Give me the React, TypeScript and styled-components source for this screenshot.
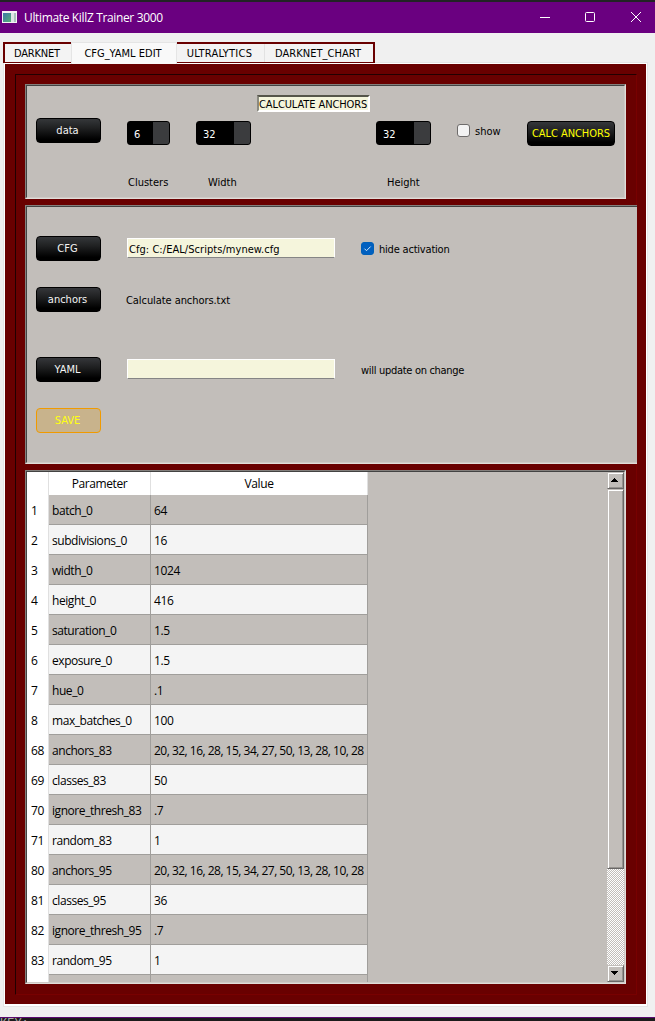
import React from 'react';
import styled, { createGlobalStyle, css } from 'styled-components';

const ui = css`
  font-family: 'DejaVu Sans Condensed', 'DejaVu Sans', sans-serif;
  font-stretch: condensed;
  font-size: 11px;
`;

const GlobalStyle = createGlobalStyle`
  * { box-sizing: border-box; }
  html, body { margin: 0; padding: 0; overflow: hidden; background: #f0f0f0; }
  body { ${ui} color: #000; line-height: 14px; white-space: nowrap; }
`;

const Window = styled.div`
  width: 655px;
  height: 1021px;
  display: flex;
  flex-direction: column;
  background: #f0f0f0;
  overflow: hidden;
`;

const TitleBar = styled.header`
  height: 33px;
  flex: none;
  border-top: 2px solid #222325;
  background: #6a0080;
  display: flex;
  align-items: center;
  padding: 0 0 1px 2px;
  color: #fff;
  font-family: 'Open Sans', 'Noto Sans', sans-serif;
  font-stretch: normal;
  font-size: 12px;
`;

const Title = styled.span`
  margin-left: 7px;
  letter-spacing: -0.35px;
  line-height: 16px;
  padding-top: 1px;
  flex: 1;
`;

const Controls = styled.div`
  display: flex;
  align-items: center;
  gap: 35px;
  padding-right: 14px;

  svg:last-child { margin-left: 1px; }
`;

const TabBar = styled.nav`
  position: relative;
  z-index: 1;
  margin: 9px 0 0 3px;
  width: 372px;
  height: 21px;
  flex: none;
  display: flex;
  background: #f3f3f3;
  border: 2px solid #690000;
  border-bottom-width: 1px;
`;

const Tab = styled.div<{ $w: number; $active?: boolean; $ls?: number; $line?: boolean }>`
  width: ${p => p.$w}px;
  height: 18px;
  line-height: 20px;
  padding-right: 2px;
  text-align: center;
  letter-spacing: ${p => p.$ls ?? 0}px;
  border-right: ${p => (p.$line ? '1px solid #e2e2e2' : 'none')};
  ${p => p.$active && css`
    margin-top: -2px;
    height: 22px;
    line-height: 21px;
    background: #f9f9f9;
    border: 1px solid #e5e5e5;
    border-bottom: none;
  `}
`;

const Page = styled.main`
  margin: -1px 0 0 3px;
  width: 645px;
  height: 945px;
  flex: none;
  background: #690000;
  border: 1px solid #e5e5e5;
  box-shadow: inset 1px 1px #fff, inset -1px -2px #fff;
  padding: 11px 10px 11px 11px;
`;

const Frame = styled.section`
  width: 622px;
  height: 921px;
  border-left: 1px solid #220000;
  border-top: 1px solid #220000;
  border-right: 1px solid #780000;
  border-bottom: 1px solid #780000;
  padding: 9px 0 0 9px;
  display: flex;
  flex-direction: column;
  gap: 6px;
`;

const Panel = styled.section<{ $w: number; $h: number; $open?: boolean }>`
  width: ${p => p.$w}px;
  height: ${p => p.$h}px;
  flex: none;
  background: #c2beba;
  border: 1px solid;
  border-color: #827f7c #e0ddd9 #e0ddd9 #827f7c;
  ${p => p.$open && css`border-right: none;`}
`;

const PanelInner = styled.div<{ $open?: boolean }>`
  width: 100%;
  height: 100%;
  border: 1px solid;
  border-color: #434343 #cecac6 #cecac6 #434343;
  ${p => p.$open && css`border-right: none;`}
`;

const Row = styled.div<{ $mt: number; $center?: boolean }>`
  display: flex;
  align-items: ${p => (p.$center ? 'center' : 'flex-start')};
  margin-top: ${p => p.$mt}px;
  padding-left: 9px;
`;

const Heading = styled.div`
  margin: 9px 0 0 230px;
  width: 113px;
  height: 17px;
  background: #f5f5dc;
  border: 2px solid;
  border-color: #55554a #fff #fff #8a8a80;
  line-height: 15px;
  letter-spacing: -0.1px;
`;

const Button = styled.button<{ $w?: number; $yellow?: boolean; $ls?: number }>`
  ${ui}
  width: ${p => p.$w ?? 65}px;
  height: 25px;
  flex: none;
  padding: 0 2px 0 0;
  line-height: 23px;
  border: 1px solid #000;
  border-radius: 4px;
  color: ${p => (p.$yellow ? '#ffff00' : '#f4f4f4')};
  letter-spacing: ${p => p.$ls ?? 0}px;
  background: linear-gradient(#35373a, #1f2021 40%, #000 88%);
  text-align: center;
`;

const CalcButton = styled(Button)`
  margin: 3px 0 0 26px;
  padding-right: 0;
`;

const SaveButton = styled(Button)`
  background: #c8b38c;
  border-color: #f09a00;
  color: #ffff10;
`;

const Spin = styled.div<{ $w: number; $ml: number }>`
  width: ${p => p.$w}px;
  height: 24px;
  margin: 3px 0 0 ${p => p.$ml}px;
  flex: none;
  border: 1px solid #000;
  border-radius: 3px;
  background: linear-gradient(to left, #3b3c3e 16px, #000 16px);
  color: #fff;
  padding-left: 6px;
  line-height: 25px;
`;

const Check = styled.span<{ $on?: boolean }>`
  width: 13px;
  height: 13px;
  flex: none;
  display: flex;
  border: 1px solid ${p => (p.$on ? '#0060b8' : '#6e6c6b')};
  border-radius: 3px;
  background: ${p => (p.$on ? '#0060c0' : '#f3f3f3')};
`;

const CheckLabel = styled.label<{ $w: number; $mt?: number; $ls?: number }>`
  display: flex;
  align-items: center;
  gap: 5px;
  width: ${p => p.$w}px;
  margin: ${p => p.$mt ?? 0}px 0 0 26px;
  letter-spacing: ${p => p.$ls ?? 0}px;
`;

const CheckText = styled.span<{ $pt?: number }>`
  padding-top: ${p => p.$pt ?? 1}px;
  margin-bottom: -1px;
`;

const Label = styled.span<{ $ml: number; $ls?: number }>`
  margin-left: ${p => p.$ml}px;
  padding-top: 2px;
  letter-spacing: ${p => p.$ls ?? 0}px;
`;

const Caption = styled(Label)<{ $w: number }>`
  width: ${p => p.$w}px;
  padding-top: 1px;
`;

const Field = styled.div`
  width: 208px;
  height: 20px;
  margin: 0 0 1px 26px;
  flex: none;
  background: #f5f5dc;
  border: 1px solid;
  border-color: #fff #fff #858585 #fff;
  padding-left: 1px;
  line-height: 21px;
  letter-spacing: 0.05px;
`;

const TableArea = styled.div`
  display: flex;
  justify-content: space-between;
  height: 510px;
  overflow: hidden;
`;

const Table = styled.div`
  width: 341px;
  display: grid;
  grid-template-columns: 22px 102px 217px;
  grid-template-rows: 23px;
  grid-auto-rows: 30px;
  font-family: 'Open Sans', 'Noto Sans', sans-serif;
  font-stretch: normal;
  font-size: 12px;
  letter-spacing: -0.4px;
`;

const Head = styled.div`
  background: #fff;
  border-right: 1px solid #e0e0e0;
  text-align: center;
  line-height: 24px;
`;

const Index = styled.div`
  background: #fff;
  border-right: 1px solid #e0e0e0;
  padding-left: 4px;
  line-height: 31px;
`;

const Cell = styled.div<{ $alt: boolean; $ls?: number }>`
  background: ${p => (p.$alt ? '#f4f4f4' : '#c2beba')};
  border-right: 1px solid #a09e9b;
  border-bottom: 1px solid #a09e9b;
  padding: 1px 0 0 3px;
  line-height: 29px;
  letter-spacing: ${p => p.$ls ?? -0.44}px;
`;

const Scroll = styled.div`
  width: 17px;
  display: flex;
  flex-direction: column;
  background: repeating-conic-gradient(#fff 0 25%, #c2beba 0 50%) 0 0 / 2px 2px;
`;

const Bevel = styled.div<{ $h: number }>`
  height: ${p => p.$h}px;
  background: #c2beba;
  border: 1px solid;
  border-color: #c2beba #696766 #696766 #c2beba;
  box-shadow: inset 1px 1px #fff, inset -1px -1px #96938f;
  display: flex;
  align-items: center;
  justify-content: center;
  padding: 0 2px 1px 0;
`;

const Grow = styled.div`flex: 1;`;

const Footer = styled.footer`
  margin-top: auto;
  height: 4px;
  flex: none;
  border-top: 1px solid #5c0a70;
  background: #1b1b1b;
  color: #aaa;
  font: 12px/12px 'Liberation Mono', monospace;
`;

const rows: [string, string, string][] = [
  ['1', 'batch_0', '64'],
  ['2', 'subdivisions_0', '16'],
  ['3', 'width_0', '1024'],
  ['4', 'height_0', '416'],
  ['5', 'saturation_0', '1.5'],
  ['6', 'exposure_0', '1.5'],
  ['7', 'hue_0', '.1'],
  ['8', 'max_batches_0', '100'],
  ['68', 'anchors_83', '20, 32, 16, 28, 15, 34, 27, 50, 13, 28, 10, 28'],
  ['69', 'classes_83', '50'],
  ['70', 'ignore_thresh_83', '.7'],
  ['71', 'random_83', '1'],
  ['80', 'anchors_95', '20, 32, 16, 28, 15, 34, 27, 50, 13, 28, 10, 28'],
  ['81', 'classes_95', '36'],
  ['82', 'ignore_thresh_95', '.7'],
  ['83', 'random_95', '1'],
  ['', '', ''],
];

export default function App() {
  return (
    <Window>
      <GlobalStyle />
      <TitleBar>
        <svg width="15" height="12" viewBox="0 0 15 12">
          <defs>
            <linearGradient id="app" x1="0" y1="0" x2="1" y2="1">
              <stop offset="0" stopColor="#3c78a8" />
              <stop offset="1" stopColor="#58b078" />
            </linearGradient>
          </defs>
          <rect width="15" height="12" fill="#f4f4f4" />
          <rect x="1" y="2" width="8" height="9" fill="url(#app)" />
          <rect x="9" y="2" width="3" height="9" fill="#dfe6e6" />
          <rect x="12" y="2" width="2" height="9" fill="#a8c4bc" />
        </svg>
        <Title>Ultimate KillZ Trainer 3000</Title>
        <Controls>
          <svg width="10" height="10"><path d="M0 5.5H10" stroke="#fff" /></svg>
          <svg width="10" height="10"><rect x=".5" y=".5" width="9" height="9" rx="1" fill="none" stroke="#fff" /></svg>
          <svg width="10" height="10"><path d="M0 0L10 10M10 0L0 10" stroke="#fff" /></svg>
        </Controls>
      </TitleBar>

      <TabBar>
        <Tab $w={66} $ls={-0.2}>DARKNET</Tab>
        <Tab $w={106} $active>CFG_YAML EDIT</Tab>
        <Tab $w={88} $line $ls={0.25}>ULTRALYTICS</Tab>
        <Tab $w={108} $ls={0.05}>DARKNET_CHART</Tab>
      </TabBar>

      <Page>
        <Frame>
          <Panel $w={601} $h={115}>
            <PanelInner>
              <Heading>CALCULATE ANCHORS</Heading>
              <Row $mt={6}>
                <Button>data</Button>
                <Spin $w={43} $ml={26}>6</Spin>
                <Spin $w={55} $ml={26}>32</Spin>
                <Spin $w={55} $ml={125}>32</Spin>
                <CheckLabel $w={44} $mt={5}><Check /><CheckText $pt={2}>show</CheckText></CheckLabel>
                <CalcButton $w={88} $yellow $ls={-0.05}>CALC ANCHORS</CalcButton>
              </Row>
              <Row $mt={29}>
                <Caption $ml={92} $w={80}>Clusters</Caption>
                <Caption $ml={0} $w={179}>Width</Caption>
                <Caption $ml={0} $w={60}>Height</Caption>
              </Row>
            </PanelInner>
          </Panel>

          <Panel $w={612} $h={259} $open>
            <PanelInner $open>
              <Row $mt={29} $center>
                <Button>CFG</Button>
                <Field>Cfg: C:/EAL/Scripts/mynew.cfg</Field>
                <CheckLabel $w={100} $ls={-0.2}>
                  <Check $on>
                    <svg width="11" height="11"><path d="M2.5 5.7L4.5 7.7L8.7 3.5" fill="none" stroke="#d5e8fa" /></svg>
                  </Check>
                  <CheckText>hide activation</CheckText>
                </CheckLabel>
              </Row>
              <Row $mt={26} $center>
                <Button>anchors</Button>
                <Label $ml={25} $ls={-0.07}>Calculate anchors.txt</Label>
              </Row>
              <Row $mt={45} $center>
                <Button>YAML</Button>
                <Field />
                <Label $ml={26} $ls={-0.3}>will update on change</Label>
              </Row>
              <Row $mt={26}>
                <SaveButton>SAVE</SaveButton>
              </Row>
            </PanelInner>
          </Panel>

          <Panel $w={601} $h={514}>
            <PanelInner>
              <TableArea>
                <Table>
                  <Head />
                  <Head>Parameter</Head>
                  <Head>Value</Head>
                  {rows.map(([n, name, value], i) => (
                    <React.Fragment key={i}>
                      <Index>{n}</Index>
                      <Cell $alt={i % 2 === 1}>{name}</Cell>
                      <Cell $alt={i % 2 === 1} $ls={value.length > 10 ? -0.51 : -0.4}>{value}</Cell>
                    </React.Fragment>
                  ))}
                </Table>
                <Scroll>
                  <Bevel $h={17}>
                    <svg width="7" height="4" shapeRendering="crispEdges"><path d="M3 0h1v1h1v1h1v1h1v1H0V3h1V2h1V1h1z" /></svg>
                  </Bevel>
                  <Bevel $h={380} />
                  <Grow />
                  <Bevel $h={17}>
                    <svg width="7" height="4" shapeRendering="crispEdges"><path d="M0 0h7v1H6v1H5v1H4v1H3V3H2V2H1V1H0z" /></svg>
                  </Bevel>
                </Scroll>
              </TableArea>
            </PanelInner>
          </Panel>
        </Frame>
      </Page>
      <Footer>KEY:</Footer>
    </Window>
  );
}
